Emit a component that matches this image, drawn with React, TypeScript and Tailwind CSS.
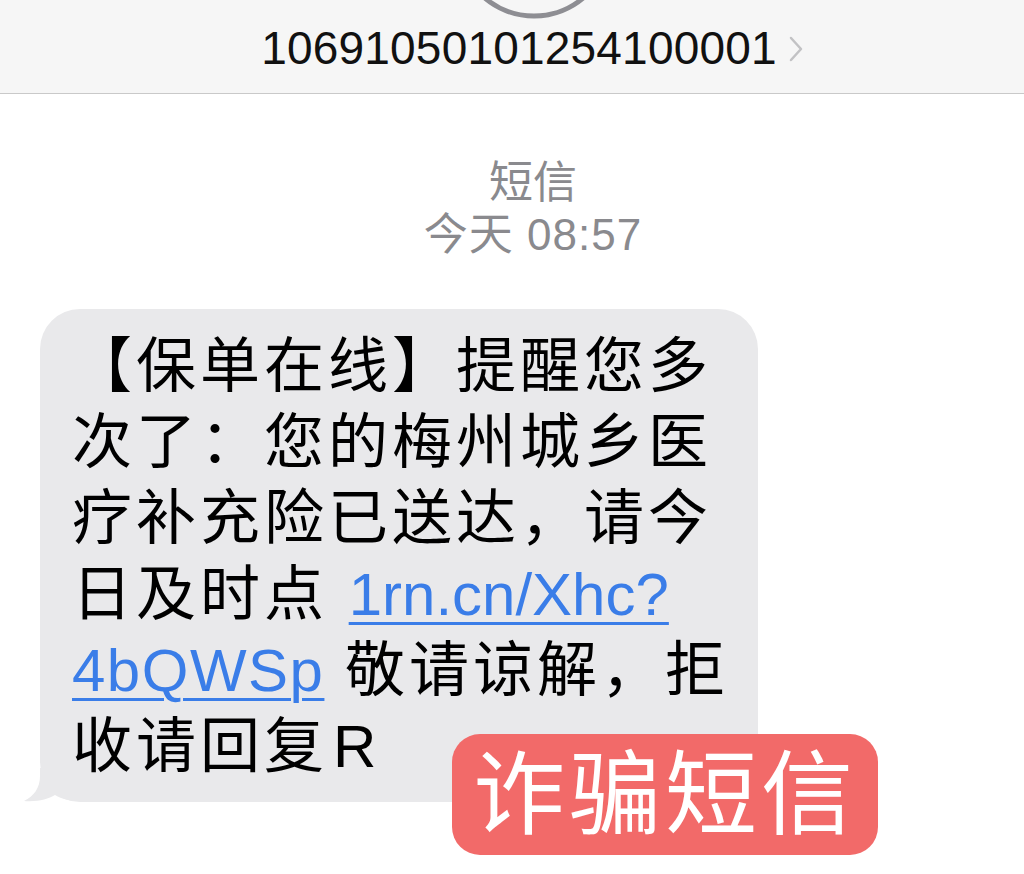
const cjk = '"Liberation Sans", "Noto Sans CJK SC", sans-serif';

const lines: { text: string; link?: string; wide?: boolean; linkFirst?: boolean }[] = [
  { text: "【保单在线】提醒您多" },
  { text: "次了：您的梅州城乡医" },
  { text: "疗补充险已送达，请今" },
  { text: "日及时点 ", link: "1rn.cn/Xhc?" },
  { text: " 敬请谅解，拒", link: "4bQWSp", linkFirst: true, wide: true },
];

function LinkText({ children, wide }: { children: string; wide?: boolean }) {
  return (
    <span
      className={
        wide
          ? "tracking-[1.5px] text-[#3a7de8] underline decoration-[3px] underline-offset-[7px]"
          : "tracking-normal text-[#3a7de8] underline decoration-[3px] underline-offset-[7px]"
      }
    >
      {children}
    </span>
  );
}

export default function App() {
  return (
    <div
      className="relative h-[874px] w-[1024px] overflow-hidden bg-white"
      style={{ fontFamily: cjk }}
    >
      <header className="relative h-[94px] border-b border-[#c9c9c9] bg-[#f6f6f6]">
        <svg
          className="absolute left-[454px] top-[-140px]"
          width="160"
          height="160"
          viewBox="0 0 160 160"
        >
          <circle cx="80" cy="80" r="76" fill="none" stroke="#8e8e93" strokeWidth="5" />
        </svg>
        <div className="flex h-full items-center justify-center gap-3 pl-[40px] pt-[2px]">
          <span className="text-[46px] leading-none tracking-[0.2px] text-[#111]">10691050101254100001</span>
          <svg width="14" height="26" viewBox="0 0 14 26" className="mt-[2px]">
            <polyline
              points="2,2 12,13 2,24"
              fill="none"
              stroke="#c2c2c4"
              strokeWidth="2.5"
              strokeLinecap="round"
              strokeLinejoin="round"
            />
          </svg>
        </div>
      </header>

      <div className="mt-[63px] flex flex-col items-center pl-[42px] text-[44px] leading-[52px] text-[#8a8a8e]">
        <span>短信</span>
        <span className="tracking-[1px]">今天 08:57</span>
      </div>

      <div className="relative ml-[40px] mt-[48px] w-[718px] rounded-[40px] bg-[#e9e9eb] pb-[17px] pl-[32px] pt-[20px]">
        {lines.map((line, i) => (
          <div
            key={i}
            className="h-[76px] whitespace-pre text-[60px] leading-[76px] tracking-[4px] text-black"
          >
            {line.linkFirst && line.link && <LinkText wide={line.wide}>{line.link}</LinkText>}
            {line.text}
            {!line.linkFirst && line.link && <LinkText wide={line.wide}>{line.link}</LinkText>}
          </div>
        ))}
        <div className="h-[76px] whitespace-pre text-[60px] leading-[76px] tracking-[4px] text-black">
          收请回复<span className="ml-[5px]">R</span>
        </div>
        <svg
          className="absolute bottom-0 left-[-16px]"
          width="56"
          height="34"
          viewBox="0 0 56 34"
        >
          <path
            d="M16 0 L16 8 C16 20 10 28 0 33 C14 34 24 31 31 27 C38 31 46 33 56 33 L56 0 Z"
            fill="#e9e9eb"
          />
        </svg>
      </div>

      <div className="absolute left-[452px] top-[734px] flex h-[121px] w-[426px] items-center justify-center rounded-[28px] bg-[#f26a69]">
        <span className="text-[92px] leading-none tracking-[4px] text-white">诈骗短信</span>
      </div>
    </div>
  );
}
